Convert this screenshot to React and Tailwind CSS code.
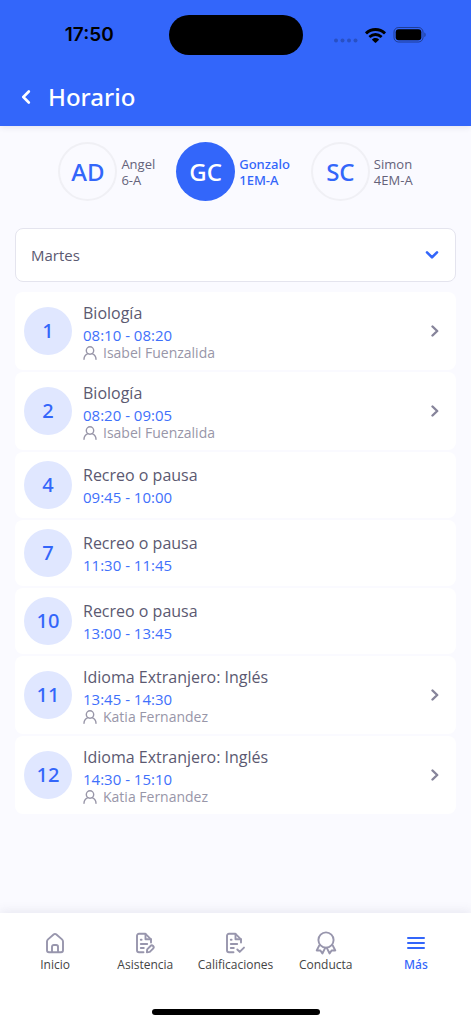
import React from "react";

const students = [
  { initials: "AD", name: "Angel", grade: "6-A" },
  { initials: "GC", name: "Gonzalo", grade: "1EM-A", active: true },
  { initials: "SC", name: "Simon", grade: "4EM-A" },
];

const blocks = [
  { n: 1, title: "Biología", time: "08:10 - 08:20", teacher: "Isabel Fuenzalida" },
  { n: 2, title: "Biología", time: "08:20 - 09:05", teacher: "Isabel Fuenzalida" },
  { n: 4, title: "Recreo o pausa", time: "09:45 - 10:00" },
  { n: 7, title: "Recreo o pausa", time: "11:30 - 11:45" },
  { n: 10, title: "Recreo o pausa", time: "13:00 - 13:45" },
  { n: 11, title: "Idioma Extranjero: Inglés", time: "13:45 - 14:30", teacher: "Katia Fernandez" },
  { n: 12, title: "Idioma Extranjero: Inglés", time: "14:30 - 15:10", teacher: "Katia Fernandez" },
];

const stroke = {
  fill: "none",
  stroke: "currentColor",
  strokeLinecap: "round",
  strokeLinejoin: "round",
  "aria-hidden": true,
};

function WifiIcon() {
  return (
    <svg viewBox="0 0 21 15" className="h-[15px] w-[21px]" fill="currentColor" aria-hidden="true">
      <path d="M10.5 0C6.6 0 3 1.5.3 4.1a.5.5 0 0 0 0 .7l1.4 1.4a.5.5 0 0 0 .7 0A11.700 11.700 0 0 1 10.500 3c3 0 5.900 1.100 8.100 3.200a.5.5 0 0 0 .7 0l1.400-1.400a.5.5 0 0 0 0-.7A14.700 14.700 0 0 0 10.500 0Z" />
      <path d="M10.500 5a9.700 9.700 0 0 0-6.700 2.700.5.5 0 0 0 0 .7l1.300 1.400c.2.2.5.2.7 0a6.900 6.900 0 0 1 9.400 0c.2.200.5.200.7 0l1.300-1.400a.5.5 0 0 0 0-.7A9.700 9.700 0 0 0 10.500 5Z" />
      <path d="M10.500 10c-1.300 0-2.500.5-3.300 1.300a.5.5 0 0 0 0 .7l2.900 2.800c.2.200.6.200.8 0l2.900-2.800a.5.5 0 0 0 0-.7A4.700 4.700 0 0 0 10.500 10Z" />
    </svg>
  );
}

function BatteryIcon() {
  return (
    <svg viewBox="0 0 34 16" className="h-4 w-[34px]" aria-hidden="true">
      <rect x="1" y="0.5" width="29" height="14.500" rx="4.500" fill="none" stroke="#000" strokeOpacity="0.4" />
      <rect x="2.700" y="2.200" width="25.600" height="11" rx="3" fill="#000" />
      <path d="M31.500 5.500c1.300.5 1.300 4 0 4.500Z" fill="#000" fillOpacity="0.5" />
    </svg>
  );
}

function PersonIcon() {
  return (
    <svg viewBox="0 0 14 14" className="h-3.5 w-3.5 shrink-0" {...stroke} strokeWidth="1.4">
      <circle cx="7" cy="4.500" r="3.700" />
      <path d="M1 13.200C1 10.500 2.800 8.600 5 7.700M13 13.200c0-2.700-1.800-4.600-4-5.500" />
    </svg>
  );
}

function HomeIcon() {
  return (
    <svg viewBox="0 0 24 24" className="h-6 w-6" {...stroke} strokeWidth="1.900">
      <path d="M4 10.600a3 3 0 0 1 1-2.200l5.600-4.900a2.100 2.100 0 0 1 2.800 0L19 8.400a3 3 0 0 1 1 2.200v8.600a2 2 0 0 1-2 2H6a2 2 0 0 1-2-2Z" />
      <path d="M9 21v-5.200a1.800 1.800 0 0 1 1.800-1.800h2.400a1.800 1.800 0 0 1 1.800 1.800V21" />
    </svg>
  );
}

function DocumentBase() {
  return (
    <>
      <path d="M10.500 21.200H6a2 2 0 0 1-2-2V4.800a2 2 0 0 1 2-2h6.500L18 8.300V11.500" />
      <path d="M12.500 3v5.300H18" />
      <path d="M7.800 8.800h.8M7.800 13h6.400M7.800 17h3" />
    </>
  );
}

function DocEditIcon() {
  return (
    <svg viewBox="0 0 24 24" className="h-6 w-6" {...stroke} strokeWidth="1.900">
      <DocumentBase />
      <path d="m14.200 18.300 3.300-3.300a1.800 1.800 0 0 1 2.600 2.600l-3.300 3.300-2.900.4Z" />
    </svg>
  );
}

function DocCheckIcon() {
  return (
    <svg viewBox="0 0 24 24" className="h-6 w-6" {...stroke} strokeWidth="1.900">
      <DocumentBase />
      <path d="m14.300 18.500 2.400 2.400 4.300-4.300" />
    </svg>
  );
}

function AwardIcon() {
  return (
    <svg viewBox="0 0 24 24" className="h-6 w-6" {...stroke} strokeWidth="1.900">
      <circle cx="12" cy="9" r="7.600" />
      <path d="M5.300 14.300 2.700 19.500l3.700-.1 2 3.100 2.800-5.700M18.700 14.300l2.600 5.200-3.700-.1-2 3.100-2.800-5.700" />
    </svg>
  );
}

function MenuIcon() {
  return (
    <svg viewBox="0 0 24 24" className="h-6 w-6" {...stroke} strokeWidth="2">
      <path d="M4 7h16M4 12h16M4 17h16" />
    </svg>
  );
}

const tabs = [
  { label: "Inicio", Icon: HomeIcon },
  { label: "Asistencia", Icon: DocEditIcon },
  { label: "Calificaciones", Icon: DocCheckIcon },
  { label: "Conducta", Icon: AwardIcon },
  { label: "Más", Icon: MenuIcon, active: true },
];

function Student({ initials, name, grade, active }) {
  return (
    <button type="button" aria-pressed={!!active} className="flex items-center gap-1 text-left">
      <span
        className={
          active
            ? "flex size-[59px] items-center justify-center rounded-full bg-[#3366fa] font-['Noto_Sans',sans-serif] text-2xl leading-8 font-medium text-white"
            : "flex size-[59px] items-center justify-center rounded-full border-2 border-[#f0f0f5] font-['Noto_Sans',sans-serif] text-2xl leading-8 font-medium text-[#3366fa]"
        }
      >
        {initials}
      </span>
      <span
        className={
          active
            ? "font-['Noto_Sans',sans-serif] text-[13px] leading-4 font-medium text-[#3366fa]"
            : "text-[13px] leading-4 text-[#64627a]"
        }
      >
        <span className="block">{name}</span>
        <span className="block">{grade}</span>
      </span>
    </button>
  );
}

function Block({ n, title, time, teacher }) {
  const body = (
    <>
      <span className="flex size-12 shrink-0 items-center justify-center rounded-full bg-[#e0e7ff] font-['Noto_Sans',sans-serif] text-xl font-medium text-[#3366fa]">
        {n}
      </span>
      <span className="min-w-0 flex-1">
        <span className="block text-base leading-6 text-[#5b5971]">{title}</span>
        <span className="block text-[15px] leading-5 text-[#3f70fb]">{time}</span>
        {teacher && (
          <span className="flex items-center gap-1.5 text-sm leading-4 text-[#9896a8]">
            <PersonIcon />
            {teacher}
          </span>
        )}
      </span>
      {teacher && (
        <svg viewBox="0 0 8 12" className="h-3 w-2 shrink-0 text-[#86849a]" {...stroke} strokeWidth="2.4">
          <path d="m1.500 1.500 4.700 4.500-4.700 4.500" />
        </svg>
      )}
    </>
  );
  const shape = "flex w-full items-center gap-[11px] rounded-lg bg-white py-[9px] pr-[17px] pl-[9px] text-left";
  return <li>{teacher ? <button type="button" className={shape}>{body}</button> : <div className={shape}>{body}</div>}</li>;
}

export default function App() {
  return (
    <div className="flex min-h-screen flex-col bg-[#fafaff] font-['Open_Sans',sans-serif]">
      <header className="bg-[#3366fa] pt-[15px] shadow-[0_1px_6px_rgba(60,60,100,0.12)]">
        <div className="grid grid-cols-[1fr_134px_1fr] items-center">
          <div className="pl-2.5 text-center font-['Inter',sans-serif] text-[19px] leading-6 font-semibold text-black">17:50</div>
          <div className="h-10 rounded-full bg-black" />
          <div className="flex items-center pl-[31px] text-black">
            <svg viewBox="0 0 24 15" className="h-[15px] w-6" fill="#2850c4" aria-hidden="true">
              <circle cx="2" cy="12.500" r="2" />
              <circle cx="8.500" cy="12.500" r="2" />
              <circle cx="15" cy="12.500" r="2" />
              <circle cx="21.500" cy="12.500" r="2" />
            </svg>
            <span className="ml-[7px]"><WifiIcon /></span>
            <span className="ml-[7px]"><BatteryIcon /></span>
          </div>
        </div>
        <div className="flex h-[71px] items-center gap-4 pt-3 pl-5">
          <button type="button" aria-label="Volver" className="flex w-3 justify-center text-white">
            <svg viewBox="0 0 10 14" className="h-3.5 w-2.5" {...stroke} strokeWidth="2.600">
              <path d="M7.800 1.500 2.300 7l5.500 5.500" />
            </svg>
          </button>
          <h1 className="font-['Noto_Sans',sans-serif] text-2xl leading-8 font-medium text-white">Horario</h1>
        </div>
      </header>

      <main className="flex-1 px-[15px] pt-4 pb-6">
        <div className="flex items-center justify-center gap-[21px]">
          {students.map((s) => (
            <Student key={s.initials} {...s} />
          ))}
        </div>

        <div className="relative mt-[27px]">
          <select
            aria-label="Día"
            defaultValue="Martes"
            className="h-[54px] w-full appearance-none rounded-lg border border-[#e4e4ee] bg-white px-[15px] text-[15px] text-[#5b5971]"
          >
            <option>Lunes</option>
            <option>Martes</option>
            <option>Miércoles</option>
            <option>Jueves</option>
            <option>Viernes</option>
          </select>
          <svg
            viewBox="0 0 14 10"
            className="pointer-events-none absolute top-[22px] right-[17px] h-2.5 w-3.5 text-[#3366fa]"
            {...stroke}
            strokeWidth="2.600"
          >
            <path d="m2 2.300 5 5 5-5" />
          </svg>
        </div>

        <ul className="mt-2.5 flex flex-col gap-0.5">
          {blocks.map((b) => (
            <Block key={b.n} {...b} />
          ))}
        </ul>
      </main>

      <nav className="bg-white px-2.5 pt-[18px] pb-[9px] shadow-[0_-2px_10px_rgba(80,80,120,0.10)]">
        <div className="grid grid-cols-5">
          {tabs.map(({ label, Icon, active }) => (
            <a
              key={label}
              href="#"
              className={
                active
                  ? "flex flex-col items-center gap-0.5 text-[#3366fa]"
                  : "flex flex-col items-center gap-0.5 text-[#9896ad]"
              }
            >
              <Icon />
              <span
                className={
                  active
                    ? "font-['Noto_Sans',sans-serif] text-xs leading-4 font-medium"
                    : "text-xs leading-4 text-[#444444]"
                }
              >
                {label}
              </span>
            </a>
          ))}
        </div>
        <div className="mx-auto mt-9 h-1.5 w-[168px] rounded-full bg-black" />
      </nav>
    </div>
  );
}
